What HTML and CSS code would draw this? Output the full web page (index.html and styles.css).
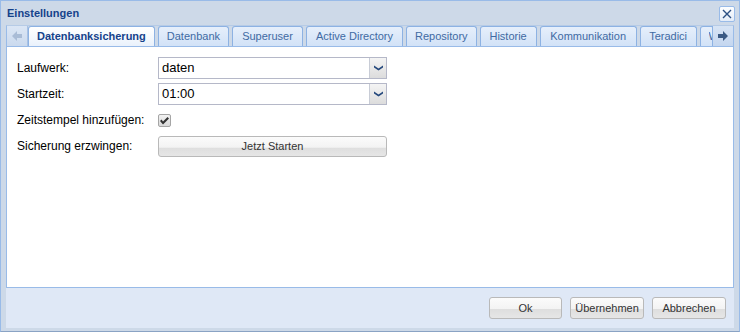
FILE: index.html
```html
<!DOCTYPE html>
<html lang="de">
<head>
    <meta charset="UTF-8">
    <title>Einstellungen</title>
    <link rel="stylesheet" href="styles.css">
</head>
<body>
    <div class="window">
        <!-- Title bar -->
        <div class="win-header">
            <span class="win-title">Einstellungen</span>
            <span class="win-close">
                <svg width="10" height="10" viewBox="0 0 10 10"><path d="M1 1 L9 9 M9 1 L1 9" stroke="#2b4f83" stroke-width="1.4" fill="none"/></svg>
            </span>
        </div>

        <!-- Tabs -->
        <div class="tabbar">
            <div class="scroller">
                <svg width="10" height="10" viewBox="0 0 10 10"><path d="M0 5 L5 0 L5 3 L10 3 L10 7 L5 7 L5 10 Z" fill="#a9bcd6"/></svg>
            </div>
            <div class="tabs">
                <div class="tab active">Datenbanksicherung</div>
                <div class="tab">Datenbank</div>
                <div class="tab wide-71">Superuser</div>
                <div class="tab wide-97">Active Directory</div>
                <div class="tab wide-70">Repository</div>
                <div class="tab">Historie</div>
                <div class="tab wide-97">Kommunikation</div>
                <div class="tab">Teradici</div>
                <div class="tab last"><span class="clip">W</span></div>
            </div>
            <div class="scroller right">
                <svg width="10" height="10" viewBox="0 0 10 10"><path d="M10 5 L5 0 L5 3 L0 3 L0 7 L5 7 L5 10 Z" fill="#3b5a84"/></svg>
            </div>
        </div>

        <!-- Tab content -->
        <div class="tab-body">
            <div class="form-row">
                <label>Laufwerk:</label>
                <div class="combo">
                    <span class="combo-text">daten</span>
                    <span class="combo-trigger"><svg width="9" height="6" viewBox="0 0 9 6"><path d="M0 0.5 L4.5 3.5 L9 0.5 L9 2.5 L4.5 5.5 L0 2.5 Z" fill="#24487c"/></svg></span>
                </div>
            </div>
            <div class="form-row">
                <label>Startzeit:</label>
                <div class="combo">
                    <span class="combo-text">01:00</span>
                    <span class="combo-trigger"><svg width="9" height="6" viewBox="0 0 9 6"><path d="M0 0.5 L4.5 3.5 L9 0.5 L9 2.5 L4.5 5.5 L0 2.5 Z" fill="#24487c"/></svg></span>
                </div>
            </div>
            <div class="form-row">
                <label>Zeitstempel hinzufügen:</label>
                <span class="checkbox">
                    <svg width="9" height="8" viewBox="0 0 9 8"><path d="M0 4 L3 7.5 L9 1.5 L7.5 0 L3 4.5 L1.5 2.5 Z" fill="#333"/></svg>
                </span>
            </div>
            <div class="form-row">
                <label>Sicherung erzwingen:</label>
                <button class="btn wide">Jetzt Starten</button>
            </div>
        </div>

        <!-- Buttons -->
        <div class="win-footer">
            <button class="btn ok">Ok</button>
            <button class="btn">Übernehmen</button>
            <button class="btn">Abbrechen</button>
        </div>
    </div>
</body>
</html>
```

FILE: styles.css
```css
body {
    margin: 0;
    padding: 0;
    font-family: "Liberation Sans", Arial, sans-serif;
    background-color: #fff;
}
.window {
    width: 740px;
    height: 332px;
    box-sizing: border-box;
    border: 1px solid #99bbe8;
    border-bottom-color: #8aa3c4;
    background-color: #cdd9e8;
    padding: 0 5px 3px 5px;
    display: flex;
    flex-direction: column;
}
.win-header {
    height: 24px;
    display: flex;
    align-items: center;
    justify-content: space-between;
}
.win-title {
    font-size: 11px;
    font-weight: bold;
    color: #15428b;
    margin-left: 1px;
    margin-top: -1px;
}
.win-close {
    width: 14px;
    height: 14px;
    border: 1px solid #99bbe8;
    border-radius: 2px;
    background: linear-gradient(#fdfeff, #e3ecf8);
    display: flex;
    align-items: center;
    justify-content: center;
    margin-right: -1px;
    margin-top: 1px;
}
.tabbar {
    height: 22px;
    display: flex;
    border-left: 1px solid #99bbe8;
    border-right: 1px solid #99bbe8;
    border-bottom: 1px solid #99bbe8;
    border-top: 1px solid #b6cbe6;
    box-sizing: border-box;
    background-color: #cdd9e8;
}
.scroller {
    width: 20px;
    flex: none;
    display: flex;
    align-items: center;
    justify-content: center;
    background: linear-gradient(#dbe6f5, #cbdaee);
    border-right: 1px solid #a9c2e4;
}
.scroller.right {
    border-right: none;
    border-left: 1px solid #8db2e3;
    background: linear-gradient(#d7e4f5, #c4d6ef);
}
.tabs {
    flex: 1;
    display: flex;
    gap: 3px;
    overflow: hidden;
    align-items: flex-end;
}
.tab {
    flex: none;
    min-width: 57px;
    height: 20px;
    box-sizing: border-box;
    padding: 0 8px;
    border: 1px solid #8db2e3;
    border-bottom: none;
    border-radius: 3px 3px 0 0;
    background: linear-gradient(#e6effb, #d2e2f7);
    font-size: 11px;
    line-height: 19px;
    text-align: center;
    color: #416aa3;
}
.tab.wide-70 {
    min-width: 70px;
}
.tab.wide-71 {
    min-width: 71px;
}
.tab.wide-97 {
    min-width: 97px;
}
.tab.active {
    height: 21px;
    margin-bottom: -1px;
    background: linear-gradient(#ffffff 0%, #f2f7fd 60%, #e8f0fb 100%);
    font-weight: bold;
    color: #15428b;
}
.tab.last {
    min-width: 0;
    width: 14px;
    padding: 0 0 0 8px;
    text-align: left;
    overflow: hidden;
}
.clip {
    display: block;
    width: 6px;
    overflow: hidden;
}
.tab-body {
    height: 241px;
    box-sizing: border-box;
    background-color: #fff;
    border: 1px solid #99bbe8;
    border-top: none;
    padding: 10px 10px 0 10px;
    display: flex;
    flex-direction: column;
    gap: 4px;
}
.form-row {
    height: 22px;
    display: flex;
    align-items: center;
}
.form-row label {
    width: 141px;
    flex: none;
    font-size: 12px;
    color: #000;
}
.combo {
    width: 229px;
    height: 22px;
    box-sizing: border-box;
    border: 1px solid #b5b8c8;
    display: flex;
    background-color: #fff;
}
.combo-text {
    flex: 1;
    font-size: 13px;
    line-height: 20px;
    padding-left: 3px;
    color: #000;
}
.combo-trigger {
    width: 16px;
    border-left: 1px solid #c8ccd6;
    background: linear-gradient(#f4f4f4, #dcdcdc);
    display: flex;
    align-items: center;
    justify-content: center;
}
.checkbox {
    width: 11px;
    height: 11px;
    border: 1px solid #a5a5a5;
    border-radius: 2px;
    background: linear-gradient(#f2f2f2, #d9d9d9);
    display: flex;
    align-items: center;
    justify-content: center;
    margin-top: 1px;
}
.btn {
    height: 22px;
    box-sizing: border-box;
    border: 1px solid #b9b9b9;
    border-radius: 3px;
    background: linear-gradient(#fbfbfb 0%, #f3f3f3 55%, #dedede 56%, #e6e6e6 100%);
    font-family: "Liberation Sans", Arial, sans-serif;
    font-size: 11px;
    color: #333;
    padding: 0;
    cursor: pointer;
}
.btn.wide {
    width: 229px;
    height: 21px;
}
.win-footer {
    height: 40px;
    background-color: #dfe8f6;
    display: flex;
    align-items: center;
    justify-content: flex-end;
    gap: 8px;
    padding-right: 8px;
}
.win-footer .btn {
    width: 74px;
}
.win-footer .btn.ok {
    width: 73px;
}
```
